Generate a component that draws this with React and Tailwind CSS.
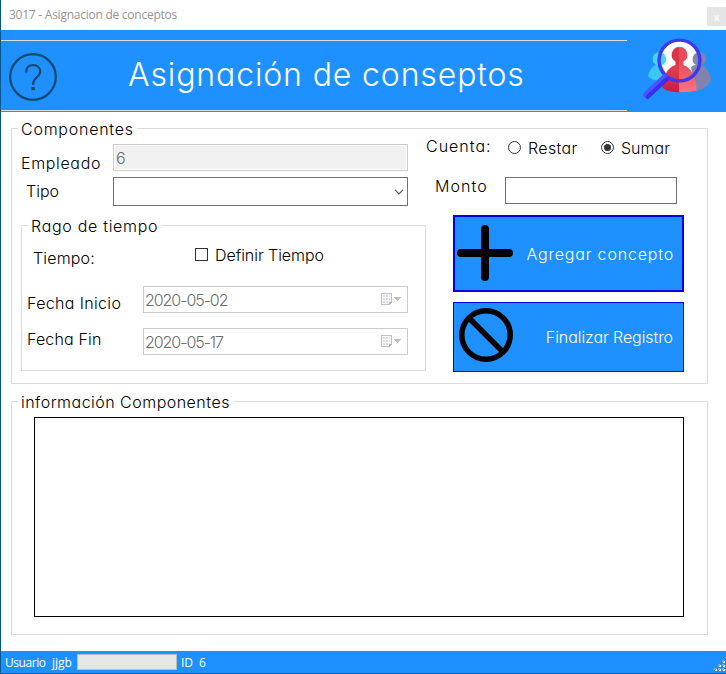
import React from "react";

function Label({ className = "", children }) {
  return <span className={`block whitespace-nowrap text-[16px] leading-5 ${className}`}>{children}</span>;
}

function Group({ title, className = "", legendClass = "", children }) {
  return (
    <section className={`border border-[#dcdcdc] ${className}`}>
      <div className="-mt-[10px] flex h-5">
        <h2 className={`bg-white whitespace-nowrap text-[16px] leading-5 ${legendClass}`}>{title}</h2>
      </div>
      {children}
    </section>
  );
}

function HelpIcon() {
  return (
    <svg className="size-12" viewBox="0 0 48 48" fill="none" stroke="#12496f" strokeWidth="2.2">
      <circle cx="24" cy="24" r="22.8" />
      <path d="M17.200 19.500V18.500c0-3.800 3-6.300 7-6.300s7 2.600 7 6.300c0 5.500-7 6.500-7 12v1.500" />
      <path d="M24.200 34v3.200" strokeWidth="3.400" />
    </svg>
  );
}

function PeopleSearchIcon() {
  return (
    <svg className="h-[64px] w-[72px]" viewBox="0 0 72 64">
      <defs>
        <linearGradient id="bodyLeft" x1="0" y1="0" x2="0" y2="1">
          <stop offset="0" stopColor="#e04450" />
          <stop offset="1" stopColor="#cc1a40" />
        </linearGradient>
        <linearGradient id="bodyRight" x1="0" y1="0" x2="0" y2="1">
          <stop offset="0" stopColor="#e4505c" />
          <stop offset="1" stopColor="#ff7480" />
        </linearGradient>
      </defs>
      <circle cx="38.500" cy="22.500" r="20" fill="#fff" />
      <path d="M7 38c1.500-6 5-11 10.500-12h3c2 5 4 10 8 12l-5 5c-8 0-15-2-16.500-5z" fill="#3cc8f2" />
      <circle cx="18.300" cy="21" r="6.800" fill="#42d6ee" />
      <path d="M50 29c3-2 5-3 8-3 7 1 11 9 12 15-1 6-7 10-15 12z" fill="#7f83ae" />
      <circle cx="58.300" cy="21" r="6.800" fill="#8086a8" />
      <path d="M21.500 50c0-11 5-21 13-23h4v27.200c-7 0-12.500-1.200-17-4.200z" fill="url(#bodyLeft)" />
      <path d="M38 27h4c8 2 13.500 12 13.500 25.500-4.500 1.200-10.500 1.700-17.500 1.700z" fill="url(#bodyRight)" />
      <path d="M38.500 9a7.800 7.800 0 0 0-4 14.500V28h4z" fill="#d93648" />
      <path d="M38 9a7.800 7.800 0 0 1 4.500 14.500V28H38z" fill="#e64c5a" />
      <circle cx="38.500" cy="22.500" r="20.400" fill="none" stroke="#4038ee" strokeWidth="3.400" />
      <path d="M23.500 39 5 56.500" stroke="#4a55fa" strokeWidth="5.500" strokeLinecap="round" />
      <path d="M26 41 6.500 59" stroke="#3a2cf2" strokeWidth="4" strokeLinecap="round" />
    </svg>
  );
}

function CalendarIcon() {
  return (
    <svg className="h-3 w-[22px]" viewBox="0 0 22 12" shapeRendering="crispEdges">
      <path d="M.5.500h10v9l-2 2h-8z" fill="#f8f8fa" stroke="#bfbfc0" />
      <path d="M2 2h7v8H2z" fill="#d9dbe5" />
      <path d="M2 4.500h7M2 7.500h7M4.500 2v8M7.500 2v8" stroke="#f8f8fa" />
      <path d="M8 12V9h3z" fill="#b5b5b8" />
      <path d="M13 4h7l-3.500 4z" fill="#bfbfb8" />
    </svg>
  );
}

function DateField({ value }) {
  return (
    <div className="flex h-[27px] w-[265px] items-start justify-between border border-[#cccccc] pl-[1px] pr-[4px]">
      <Label className="mt-[3px] text-[#6d6d6d] tracking-[-1.050px]">{value}</Label>
      <span className="mt-[6px] flex"><CalendarIcon /></span>
    </div>
  );
}

function Radio({ checked }) {
  return (
    <span className="flex size-[13px] items-center justify-center rounded-full border border-[#333]">
      {checked && <span className="size-[7px] rounded-full bg-[#333]" />}
    </span>
  );
}

function Header() {
  return (
    <header className="flex h-[82px] justify-between bg-[#1e90ff]">
      <div className="mt-[10px] flex h-[71px] w-[626px] border-y border-[#dcdcdc]">
        <div className="ml-[8px] mt-[12px] w-[119px]"><HelpIcon /></div>
        <h1 className="mt-[14px] whitespace-nowrap text-[32px] leading-10 text-white tracking-[0.870px]">Asignación de conseptos</h1>
      </div>
      <div className="mr-[13px] mt-[8px]"><PeopleSearchIcon /></div>
    </header>
  );
}

export default function App() {
  return (
    <div className="flex h-[674px] w-[726px] flex-col overflow-hidden border-l border-[#00558b] bg-white font-['Inter',sans-serif] font-light text-black [font-feature-settings:'cv11']">
      <div className="flex h-[30px] justify-between font-['Open_Sans','Noto_Sans',sans-serif] font-normal">
        <span className="ml-[8px] mt-[7px] whitespace-nowrap text-[12px] leading-4 text-[#949494] tracking-[-0.250px]">3017 - Asignacion de conceptos</span>
        <span className="mt-[7px] flex h-[19px] w-[19px] items-center justify-center bg-[#e5e5e5] text-[11px] font-bold leading-none text-[#f8f8f8]">x</span>
      </div>
      <Header />
      <main className="flex grow flex-col pl-[10px] pt-[16px]">
        <Group title="Componentes" className="h-[256px] w-[697px]" legendClass="ml-[6px] pl-[3px] pr-[3px] tracking-[0.750px]">
          <div className="flex">
            <div className="w-[415px]">
              <div className="mt-[5px] flex h-[27px]">
                <Label className="ml-[9px] mt-[9px] w-[92px] tracking-[0.650px]">Empleado</Label>
                <div className="h-[27px] w-[295px] border border-[#cccccc] bg-white p-px">
                  <div className="h-full bg-[#f0f0f0] pl-[1px]"><Label className="pt-[2px] text-[#6d6d6d]">6</Label></div>
                </div>
              </div>
              <div className="mt-[6px] flex h-[29px]">
                <Label className="ml-[14px] mt-[4px] w-[87px]">Tipo</Label>
                <div className="flex h-[29px] w-[295px] items-center justify-end border border-[#707070] pr-[3px]">
                  <svg className="h-[6px] w-[10px]" viewBox="0 0 10 6" fill="none" stroke="#555" strokeWidth="1.200"><path d="m1 .800 4 4 4-4" /></svg>
                </div>
              </div>
              <Group title="Rago de tiempo" className="ml-[9px] mt-[19px] h-[146px] w-[405px]" legendClass="ml-[6px] pl-[3px] pr-[3px] tracking-[0.700px]">
                <div className="mt-[9px] flex h-[41px]">
                  <Label className="ml-[11px] mt-[3px] w-[162px] tracking-[0.150px]">Tiempo:</Label>
                  <span className="mt-[3px] size-[13px] border border-[#333]" />
                  <Label className="ml-[7px] tracking-[-0.050px]">Definir Tiempo</Label>
                </div>
                <div className="flex h-[42px]">
                  <Label className="ml-[5px] mt-[7px] w-[116px] tracking-[0.350px]">Fecha Inicio</Label>
                  <DateField value="2020-05-02" />
                </div>
                <div className="flex h-[27px]">
                  <Label className="ml-[5px] mt-[1px] w-[116px] tracking-[0.150px]">Fecha Fin</Label>
                  <DateField value="2020-05-17" />
                </div>
              </Group>
            </div>
            <div className="flex w-[258px] flex-col">
              <div className="mt-[-3px] flex h-[41px]">
                <Label className="-ml-px w-[82px] tracking-[1px]">Cuenta:</Label>
                <span className="mt-[5px]"><Radio /></span>
                <Label className="ml-[7px] mt-[2px] w-[73px] tracking-[0.350px]">Restar</Label>
                <span className="mt-[5px]"><Radio checked /></span>
                <Label className="ml-[7px] mt-[2px]">Sumar</Label>
              </div>
              <div className="flex h-[38px]">
                <Label className="ml-[8px] mt-[-1px] w-[70px] tracking-[1.100px]">Monto</Label>
                <div className="h-[27px] w-[172px] border border-[#707070]" />
              </div>
              <button className="ml-[26px] flex h-[77px] w-[231px] justify-between border-2 border-[#0000ee] bg-[#1e90ff] text-white">
                <svg className="ml-[2px] mt-[8px] size-[56px]" viewBox="0 0 56 56" stroke="#000" strokeWidth="8" strokeLinecap="round"><path d="M4 28h48M28 4v48" /></svg>
                <Label className="mr-[8px] mt-[27px] tracking-[0.820px]">Agregar concepto</Label>
              </button>
              <button className="ml-[26px] mt-[10px] flex h-[70px] w-[231px] justify-between border border-[#0000ee] bg-[#1e90ff] text-white">
                <svg className="ml-[5px] mt-[5px] size-[54px]" viewBox="0 0 54 54" fill="none" stroke="#000" strokeWidth="5.500"><circle cx="27" cy="27" r="24.200" /><path d="m10 10 34 34" /></svg>
                <Label className="mr-[10px] mt-[24px] tracking-[-0.080px]">Finalizar Registro</Label>
              </button>
            </div>
          </div>
        </Group>
        <Group title="información Componentes" className="mt-[17px] h-[234px] w-[697px]" legendClass="ml-[6px] pl-[3px] pr-[3px] tracking-[0.480px]">
          <div className="ml-[22px] mt-[5px] h-[200px] w-[650px] border border-black" />
        </Group>
      </main>
      <footer className="flex h-[23px] items-start border-b border-[#0862ae] bg-[#1e90ff] font-['Open_Sans','Noto_Sans',sans-serif] text-[12px] font-normal leading-4 text-white">
        <span className="ml-[4px] mt-[4px] w-[47px] tracking-[-0.450px]">Usuario</span>
        <span className="mt-[4px] w-[25px]">jjgb</span>
        <span className="mt-[3px] h-[16px] w-[100px] border border-[#bcbcbc] bg-[#e6e6e6]" />
        <span className="ml-[4px] mt-[4px] w-[18px]">ID</span>
        <span className="mt-[4px]">6</span>
        <svg className="ml-auto mt-[9px] h-[12px] w-[12px]" viewBox="0 0 12 12" shapeRendering="crispEdges">
          <path d="M9 1h2v2H9zM5 5h2v2H5zM9 5h2v2H9zM1 9h2v2H1zM5 9h2v2H5zM9 9h2v2H9z" fill="#fff" />
          <path d="M8 0h2v2H8zM4 4h2v2H4zM8 4h2v2H8zM0 8h2v2H0zM4 8h2v2H4zM8 8h2v2H8z" fill="#a0a0a0" />
        </svg>
      </footer>
    </div>
  );
}
